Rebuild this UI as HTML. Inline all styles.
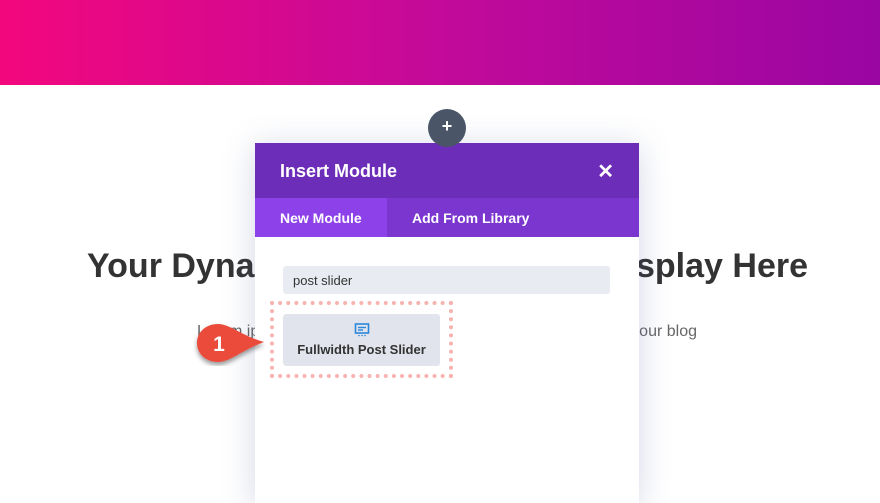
<!DOCTYPE html>
<html><head><meta charset="utf-8"><style>
*{margin:0;padding:0;box-sizing:border-box}
body{width:880px;height:486px;overflow:hidden;background:#fff;font-family:"Liberation Sans",sans-serif;position:relative}
.hdr{position:absolute;left:0;top:0;width:880px;height:85px;background:linear-gradient(90deg,#f3077d 0%,#c30a9a 50%,#9a06a2 100%)}
.h1a{position:absolute;top:247px;left:87px;font-size:34px;font-weight:bold;color:#333;white-space:nowrap}
.h1b{position:absolute;top:247px;right:72px;font-size:34px;font-weight:bold;color:#333;white-space:nowrap}
.suba{position:absolute;top:323px;left:197px;font-size:16px;color:#666;white-space:nowrap}
.subb{position:absolute;top:323px;right:183px;font-size:16px;color:#666;white-space:nowrap}
.modal{position:absolute;left:255px;top:143px;width:384px;height:360px;background:#fff;box-shadow:0 4px 30px rgba(80,100,160,.25)}
.mh{height:55px;background:#6c2eb8;color:#fff;font-size:18px;font-weight:bold;padding:18px 0 0 25px;position:relative}
.mh .x{position:absolute;right:25px;top:16px;font-size:20px}
.tabs{height:39px;background:#7b36cf;display:flex;color:#fff;font-size:14px;font-weight:bold}
.tabs div{padding:12px 0 0 25px}
.tabs .a{background:#8c42e8;width:132px}
.plus{position:absolute;left:428px;top:109px;width:38px;height:38px;border-radius:50%;background:#4a5568;color:#fff;text-align:center;font-size:18px;line-height:34px;font-weight:bold}
.tri{position:absolute;left:437px;top:132px;width:0;height:0;border-left:10px solid transparent;border-right:10px solid transparent;border-bottom:11px solid #6c2eb8}
.search{position:absolute;left:283px;top:266px;width:327px;height:28px;background:#e8ebf2;border-radius:3px;font-size:13px;color:#333;padding:7px 0 0 10px}
.dot{position:absolute;left:270px;top:301px;width:183px;height:77px;border:4px dotted #f7b3b0}
.btn{position:absolute;left:283px;top:314px;width:157px;height:52px;background:#e1e4ec;border-radius:3px;text-align:center;font-size:13px;color:#333;font-weight:bold}
.btn svg{margin-top:9px}
.badge{position:absolute;left:192px;top:320px}
</style></head><body>
<div class="hdr"></div>
<div class="h1a">Your Dynamic</div>
<div class="h1b">Display Here</div>
<div class="suba">Lorem ipsum</div>
<div class="subb">from your blog</div>
<div class="modal">
<div class="mh">Insert Module<span class="x">✕</span></div>
<div class="tabs"><div class="a">New Module</div><div>Add From Library</div></div>
</div>
<div class="tri"></div>
<div class="plus">+</div>
<div class="search">post slider</div>
<div class="dot"></div>
<div class="btn"><svg width="16" height="14" viewBox="0 0 16 14"><rect x="1.5" y="1" width="13" height="9" fill="none" stroke="#2b87da" stroke-width="1.6"/><line x1="4" y1="4.5" x2="12" y2="4.5" stroke="#2b87da" stroke-width="1.4"/><line x1="4" y1="7" x2="9" y2="7" stroke="#2b87da" stroke-width="1.4"/><circle cx="5" cy="12.5" r=".8" fill="#2b87da"/><circle cx="8" cy="12.5" r=".8" fill="#2b87da"/><circle cx="11" cy="12.5" r=".8" fill="#2b87da"/></svg><div style="margin-top:2px">Fullwidth Post Slider</div></div>
<svg class="badge" width="76" height="50" viewBox="0 0 76 50"><defs><filter id="s"><feDropShadow dx="0" dy="3" stdDeviation="2.5" flood-opacity=".4"/></filter></defs><path d="M26 4 C14 4 5 12 5 23 C5 34 14 42 26 42 C38 42 50 30 72 22 C50 16 38 4 26 4Z" fill="#ea4b3a" filter="url(#s)"/><text x="27" y="31" font-family="Liberation Sans" font-size="21" font-weight="bold" fill="#fff" text-anchor="middle">1</text></svg>
</body></html>
